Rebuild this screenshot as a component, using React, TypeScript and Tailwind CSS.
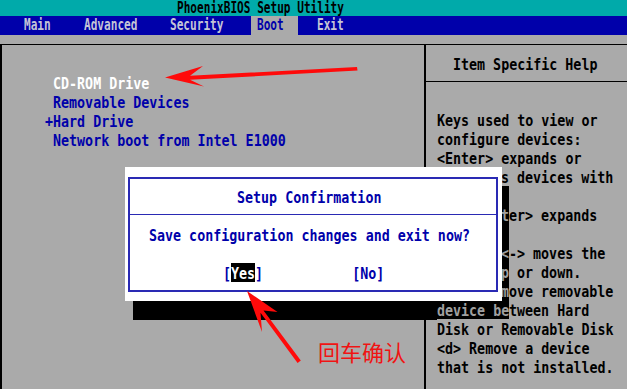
import React from "react";

function T({ children, className = "" }: { children: React.ReactNode; className?: string }) {
  return (
    <span className={`inline-block whitespace-pre scale-y-[1.25] translate-y-[1px] ${className}`}>{children}</span>
  );
}

function H({ children }: { children: React.ReactNode }) {
  return <span className="inline-block whitespace-pre leading-[11px] scale-y-[1.38]">{children}</span>;
}

const helpRows = [
  "Keys used to view or",
  "configure devices:",
  "<Enter> expands or",
  "collapses devices with",
  "a + or -",
  "<Ctrl+Enter> expands",
  "all",
  "<+> and <-> moves the",
  "device up or down.",
  "<n> May move removable",
  "device between Hard",
  "Disk or Removable Disk",
  "<d> Remove a device",
  "that is not installed.",
];

const bootRows: { text: string; white?: boolean }[] = [
  { text: " CD-ROM Drive", white: true },
  { text: " Removable Devices" },
  { text: "+Hard Drive" },
  { text: " Network boot from Intel E1000" },
];

function HelpRow({ text, n }: { text: string; n: number }) {
  // rows 9..15: first 8 cells lie under the dialog; rows 10..15 cell 8 is shadow; row 16 cells 0..8 shadow
  if (n >= 9 && n <= 15) {
    const cell = text[8] ?? " ";
    const rest = text.slice(9);
    const shadow = n >= 10;
    return (
      <div className="h-[19px] leading-[19px] flex">
        <span className="w-[64px]" />
        <span className={`w-[8px] ${shadow ? "bg-black text-[#a0a0a0]" : ""}`}>
          <T>{cell}</T>
        </span>
        {rest.length > 0 && (
          <span>
            <T>{rest}</T>
          </span>
        )}
      </div>
    );
  }
  if (n === 16) {
    return (
      <div className="h-[19px] leading-[19px] flex">
        <span className="w-[72px] bg-black text-[#a0a0a0]">
          <T>{text.slice(0, 9)}</T>
        </span>
        <span>
          <T>{text.slice(9)}</T>
        </span>
      </div>
    );
  }
  return (
    <div className="h-[19px] leading-[19px]">
      <T>{text}</T>
    </div>
  );
}

export default function App() {
  return (
    <div className="relative w-[627px] h-[389px] overflow-hidden bg-[#aaaaaa] flex flex-col font-['DejaVu_Sans_Mono',monospace]">
      {/* title bar */}
      <div className="h-[16px] shrink-0 bg-[#00aaaa] flex items-center pl-[177px] text-[11.1px] font-bold text-black">
        <H>PhoenixBIOS Setup Utility</H>
      </div>
      {/* menu bar */}
      <div className="h-[19px] shrink-0 bg-[#0000aa] flex items-stretch pl-[24px] text-[11.1px] font-bold text-[#c4c4d6]">
        <span className="w-[60px] flex items-center"><H>Main</H></span>
        <span className="w-[86px] flex items-center"><H>Advanced</H></span>
        <span className="w-[81px] flex items-center"><H>Security</H></span>
        <span className="w-[47px] bg-[#aaaaaa] text-[#0000aa] pl-[6px] flex items-center"><H>Boot</H></span>
        <span className="ml-[19px] flex items-center"><H>Exit</H></span>
      </div>
      {/* body */}
      <div className="flex-1 min-h-0 pt-[9px]">
        <div className="h-full border-t border-black flex text-[13.33px] font-bold">
          <div className="w-[424px] shrink-0 border-l-2 border-black pt-[27.7px] pl-[43px]">
            {bootRows.map((r) => (
              <div key={r.text} className={`h-[19px] leading-[19px] ${r.white ? "text-white" : "text-[#0000aa]"}`}>
                <T>{r.text}</T>
              </div>
            ))}
          </div>
          <div className="flex-1 border-l-2 border-black flex flex-col text-black">
            <div className="h-[37px] shrink-0 border-b border-black pt-[8.7px] pl-[27px]">
              <div className="h-[19px] leading-[19px]"><T>Item Specific Help</T></div>
            </div>
            <div className="pt-[27.7px] pl-[11px]">
              {helpRows.map((r, i) => (
                <HelpRow key={i} text={r} n={i + 6} />
              ))}
            </div>
          </div>
        </div>
      </div>

      {/* dialog shadow (bottom strip, left of help text) */}
      <div className="absolute left-[133px] top-[300.7px] w-[304px] h-[19px] bg-black z-20" />

      {/* dialog */}
      <div className="absolute left-[125px] top-[167px] w-[377px] h-[134px] bg-white z-30 pt-[10px] pl-[3px] pr-[4px] pb-[9px]">
        <div className="h-full border-2 border-[#2a2ab4] flex flex-col text-[13.33px] font-bold text-[#0000aa]">
          <div className="h-[36px] shrink-0 border-b border-[#2a2ab4] flex items-center pl-[107px] leading-[19px]">
            <T>Setup Confirmation</T>
          </div>
          <div className="mt-[9.7px] h-[19px] leading-[19px] pl-[19px]">
            <T>Save configuration changes and exit now?</T>
          </div>
          <div className="mt-[19px] h-[19px] leading-[19px] pl-[93px] flex items-stretch">
            <T>[</T>
            <span className="bg-black text-white"><T>Yes</T></span>
            <T>]</T>
            <span className="ml-[89px]"><T>[No]</T></span>
          </div>
        </div>
      </div>

      {/* annotations */}
      <svg className="absolute inset-0 z-40 pointer-events-none" width="627" height="389" viewBox="0 0 627 389">
        <polygon
          points="165,77.5 203,66 190,75.8 357,67 357.5,70.5 190,79.8 204,86.5"
          fill="#ff0a0a"
        />
        <polygon
          points="247,291 277.5,312 263.5,310.5 300.8,360.6 297.6,363 260.5,312.8 262,332"
          fill="#ff0a0a"
        />
      </svg>
      <div className="absolute left-[318px] top-[340px] z-40 text-[22px] leading-[22px] text-[#f01414] font-['Noto_Sans_CJK_SC',sans-serif]">
        回车确认
      </div>
    </div>
  );
}
